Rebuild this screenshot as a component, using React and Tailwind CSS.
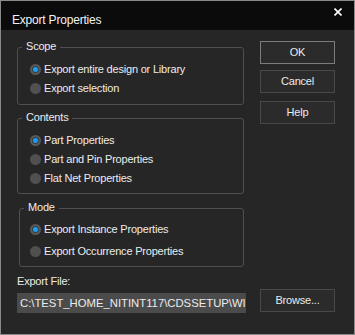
import React from "react";

function Radio({ checked, label, className = "" }) {
  return (
    <div className={"flex items-center " + className}>
      {checked ? (
        <span className="ml-[12px] flex h-[11px] w-[11px] items-center justify-center rounded-full bg-[#5a5a5a]">
          <span className="flex h-[7px] w-[7px] items-center justify-center rounded-full bg-[#3c3c3c]">
            <span className="h-[5px] w-[5px] rounded-full bg-[#12a0ff]" />
          </span>
        </span>
      ) : (
        <span className="ml-[12px] h-[11px] w-[11px] rounded-full bg-[#505050]" />
      )}
      <span className="ml-[3px] whitespace-nowrap">{label}</span>
    </div>
  );
}

function Group({ title, className = "", children }) {
  return (
    <div className={"relative rounded-[3px] border border-[#4f4f4f] " + className}>
      <span className="absolute left-[4px] top-[-9px] bg-[#262626] px-[4px] leading-[14px]">{title}</span>
      {children}
    </div>
  );
}

function Button({ children, def = false, className = "" }) {
  return (
    <div
      className={
        "flex h-[23px] w-[75px] items-center justify-center border bg-[#2b2b2b] " +
        (def ? "border-[#7c7c7c] " : "border-[#484848] ") +
        className
      }
    >
      {children}
    </div>
  );
}

export default function App() {
  return (
    <div className="h-[335px] w-[355px] overflow-hidden border border-[#8a8a8a] bg-[#262626] font-['Liberation_Sans',sans-serif] text-[11px] tracking-[-0.2px] text-[#ececec]">
      <div className="flex h-[29px] items-start justify-between bg-[#0b0b0b]">
        <span className="ml-[11px] mt-[12px] text-[12px] leading-[14px] text-[#f2f2f2]">Export Properties</span>
        <svg className="mr-[12px] mt-[7px]" width="8" height="8" viewBox="0 0 8 8">
          <path d="M0.5 0.5 L7.5 7.5 M7.5 0.5 L0.5 7.5" stroke="#ffffff" strokeWidth="1.6" />
        </svg>
      </div>
      <div className="flex">
        <div className="ml-[16px] flex w-[229px] flex-col">
          <Group title="Scope" className="mt-[17px] h-[58px] w-[227px]">
            <div className="pt-[12px]">
              <Radio checked label="Export entire design or Library" className="h-[19px]" />
              <Radio label="Export selection" className="h-[19px]" />
            </div>
          </Group>
          <Group title="Contents" className="mt-[13px] h-[76px] w-[227px]">
            <div className="pt-[12px]">
              <Radio checked label="Part Properties" className="h-[19px]" />
              <Radio label="Part and Pin Properties" className="h-[19px]" />
              <Radio label="Flat Net Properties" className="h-[19px]" />
            </div>
          </Group>
          <Group title="Mode" className="ml-[2px] mt-[14px] h-[59px] w-[225px]">
            <div className="pt-[10px]">
              <Radio checked label="Export Instance Properties" className="-ml-[2px] h-[20px]" />
              <Radio label="Export Occurrence Properties" className="-ml-[2px] mt-[2px] h-[20px]" />
            </div>
          </Group>
          <div className="mt-[7px] h-[14px] leading-[14px]">Export File:</div>
          <div className="mt-[5px] flex h-[20px] w-[229px] items-center overflow-hidden bg-[#4b4b4b] pl-[3px]">
            <span className="whitespace-nowrap text-[11.3px] tracking-[0px]">C:\TEST_HOME_NITINT117\CDSSETUP\WI</span>
          </div>
        </div>
        <div className="ml-[14px] flex flex-col">
          <Button def className="mt-[11px]">OK</Button>
          <Button className="mt-[6px]">Cancel</Button>
          <Button className="mt-[8px]">Help</Button>
          <Button className="mt-[165px]">Browse...</Button>
        </div>
      </div>
    </div>
  );
}
